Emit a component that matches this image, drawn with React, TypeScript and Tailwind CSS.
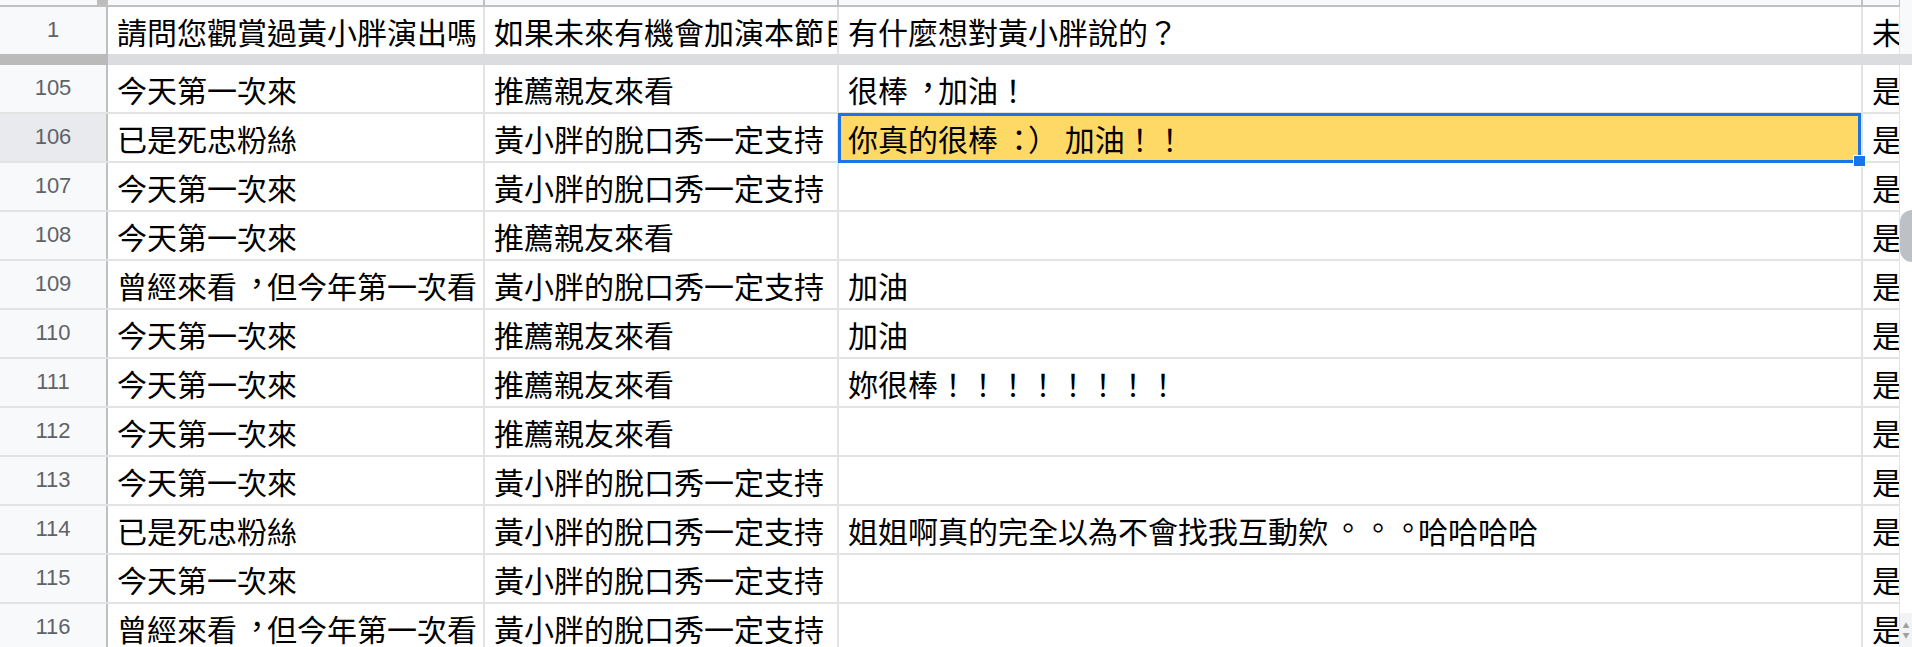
const cjk = "font-['Noto_Sans_CJK_TC','Noto_Sans_CJK_SC',sans-serif]"

type Row = { n: number; a: string; b: string; c: string; d: string }

const rows: Row[] = [
  { n: 105, a: '今天第一次來', b: '推薦親友來看', c: '很棒，加油！', d: '是' },
  { n: 106, a: '已是死忠粉絲', b: '黃小胖的脫口秀一定支持', c: '你真的很棒：） 加油！！', d: '是' },
  { n: 107, a: '今天第一次來', b: '黃小胖的脫口秀一定支持', c: '', d: '是' },
  { n: 108, a: '今天第一次來', b: '推薦親友來看', c: '', d: '是' },
  { n: 109, a: '曾經來看，但今年第一次看', b: '黃小胖的脫口秀一定支持', c: '加油', d: '是' },
  { n: 110, a: '今天第一次來', b: '推薦親友來看', c: '加油', d: '是' },
  { n: 111, a: '今天第一次來', b: '推薦親友來看', c: '妳很棒！！！！！！！！', d: '是' },
  { n: 112, a: '今天第一次來', b: '推薦親友來看', c: '', d: '是' },
  { n: 113, a: '今天第一次來', b: '黃小胖的脫口秀一定支持', c: '', d: '是' },
  { n: 114, a: '已是死忠粉絲', b: '黃小胖的脫口秀一定支持', c: '姐姐啊真的完全以為不會找我互動欸。。。哈哈哈哈', d: '是' },
  { n: 115, a: '今天第一次來', b: '黃小胖的脫口秀一定支持', c: '', d: '是' },
  { n: 116, a: '曾經來看，但今年第一次看', b: '黃小胖的脫口秀一定支持', c: '', d: '是' },
]

// Taiwan-style centred punctuation: the installed font puts ，。： low / to one side
function Text({ s }: { s: string }) {
  return (
    <>
      {Array.from(s).map((ch, i) =>
        ch === '，' || ch === '。' ? (
          <span key={i} className="inline-block w-[30px] translate-x-[5px] -translate-y-[4px]">
            {ch}
          </span>
        ) : ch === '：' ? (
          <span key={i} className="inline-block w-[30px] translate-x-[6px]">
            {ch}
          </span>
        ) : (
          ch
        )
      )}
    </>
  )
}

function RowHeader({ n, active }: { n: number; active?: boolean }) {
  return (
    <div
      className={`w-[108px] shrink-0 flex items-center justify-center border-r-2 border-[#c0c0c0] text-[22px] font-normal text-[#5f6368] font-['Liberation_Sans',Arial,sans-serif] ${
        active ? 'bg-[#e8eaed]' : 'bg-[#f8f9fa]'
      }`}
    >
      {n}
    </div>
  )
}

function Cell({ w, children, last }: { w: string; children?: React.ReactNode; last?: boolean }) {
  return (
    <div
      className={`${w} shrink-0 flex items-center overflow-hidden whitespace-nowrap pl-[9px] ${
        last ? 'border-r' : 'border-r-2'
      } border-[#e2e3e3]`}
    >
      {children}
    </div>
  )
}

function DataRow({ r }: { r: Row }) {
  const selected = r.n === 106
  return (
    <div className="flex h-[49px] shrink-0 border-b-2 border-[#e2e3e3]">
      <RowHeader n={r.n} active={selected} />
      <Cell w="w-[377px]">
        <Text s={r.a} />
      </Cell>
      <Cell w="w-[354px]">
        <Text s={r.b} />
      </Cell>
      {selected ? (
        <div className="w-[1024px] shrink-0 relative z-10 flex items-center whitespace-nowrap pl-[9px] bg-[#ffd966] border-r-2 border-[#e2e3e3]">
          <span>
            <Text s={r.c} />
          </span>
          <div className="absolute -top-px -left-px right-0 -bottom-[2px] border-[3px] border-[#1a73e8]" />
          <div className="absolute -right-[5px] -bottom-[6px] w-[13px] h-[12px] bg-[#1a73e8] border border-white" />
        </div>
      ) : (
        <Cell w="w-[1024px]">
          <Text s={r.c} />
        </Cell>
      )}
      <Cell w="w-[37px]" last>
        {r.d}
      </Cell>
    </div>
  )
}

export default function App() {
  return (
    <div
      lang="zh-Hant-TW"
      className={`w-[1912px] h-[647px] overflow-hidden bg-white flex text-[30px] text-black leading-[1.2] ${cjk}`}
    >
      {/* sheet grid */}
      <div className="w-[1900px] flex flex-col">
        {/* column header strip, cut off at top */}
        <div className="flex h-[7px] shrink-0 border-b-2 border-[#c0c0c0] bg-[#f8f9fa]">
          <div className="w-[108px] shrink-0 flex justify-end border-r-2 border-[#c0c0c0]">
            <div className="w-[9px] bg-[#bdbdbd]" />
          </div>
          <div className="w-[377px] shrink-0 border-r-2 border-[#c0c0c0]" />
          <div className="w-[354px] shrink-0 border-r-2 border-[#c0c0c0]" />
          <div className="w-[1024px] shrink-0 border-r-2 border-[#c0c0c0]" />
          <div className="w-[37px] shrink-0 border-r border-[#c0c0c0]" />
        </div>

        {/* frozen header row */}
        <div className="flex h-[47px] shrink-0">
          <RowHeader n={1} />
          <Cell w="w-[377px]">請問您觀賞過黃小胖演出嗎</Cell>
          <Cell w="w-[354px]">如果未來有機會加演本節目</Cell>
          <Cell w="w-[1024px]">有什麼想對黃小胖說的？</Cell>
          <Cell w="w-[37px]" last>
            未來
          </Cell>
        </div>

        {/* freeze divider */}
        <div className="flex h-[11px] shrink-0">
          <div className="w-[108px] shrink-0 bg-[#bababa]" />
          <div className="flex-1 bg-[#dadce0]" />
        </div>

        {rows.map((r) => (
          <DataRow key={r.n} r={r} />
        ))}
      </div>

      {/* vertical scrollbar */}
      <div className="w-[12px] shrink-0 flex flex-col">
        <div className="h-[54px] shrink-0 bg-[#f8f9fa]" />
        <div className="h-[11px] shrink-0 bg-[#dadce0]" />
        <div className="flex-1 bg-white">
          <div className="mt-[145px] h-[52px] rounded-l-full bg-[#bdc1c6]" />
        </div>
        <div className="h-[34px] shrink-0 bg-[#f1f3f4] flex flex-col items-center justify-center gap-[3px] text-[7px] leading-none text-[#a0a0a0]">
          <span>▲</span>
          <span>▼</span>
        </div>
      </div>
    </div>
  )
}
